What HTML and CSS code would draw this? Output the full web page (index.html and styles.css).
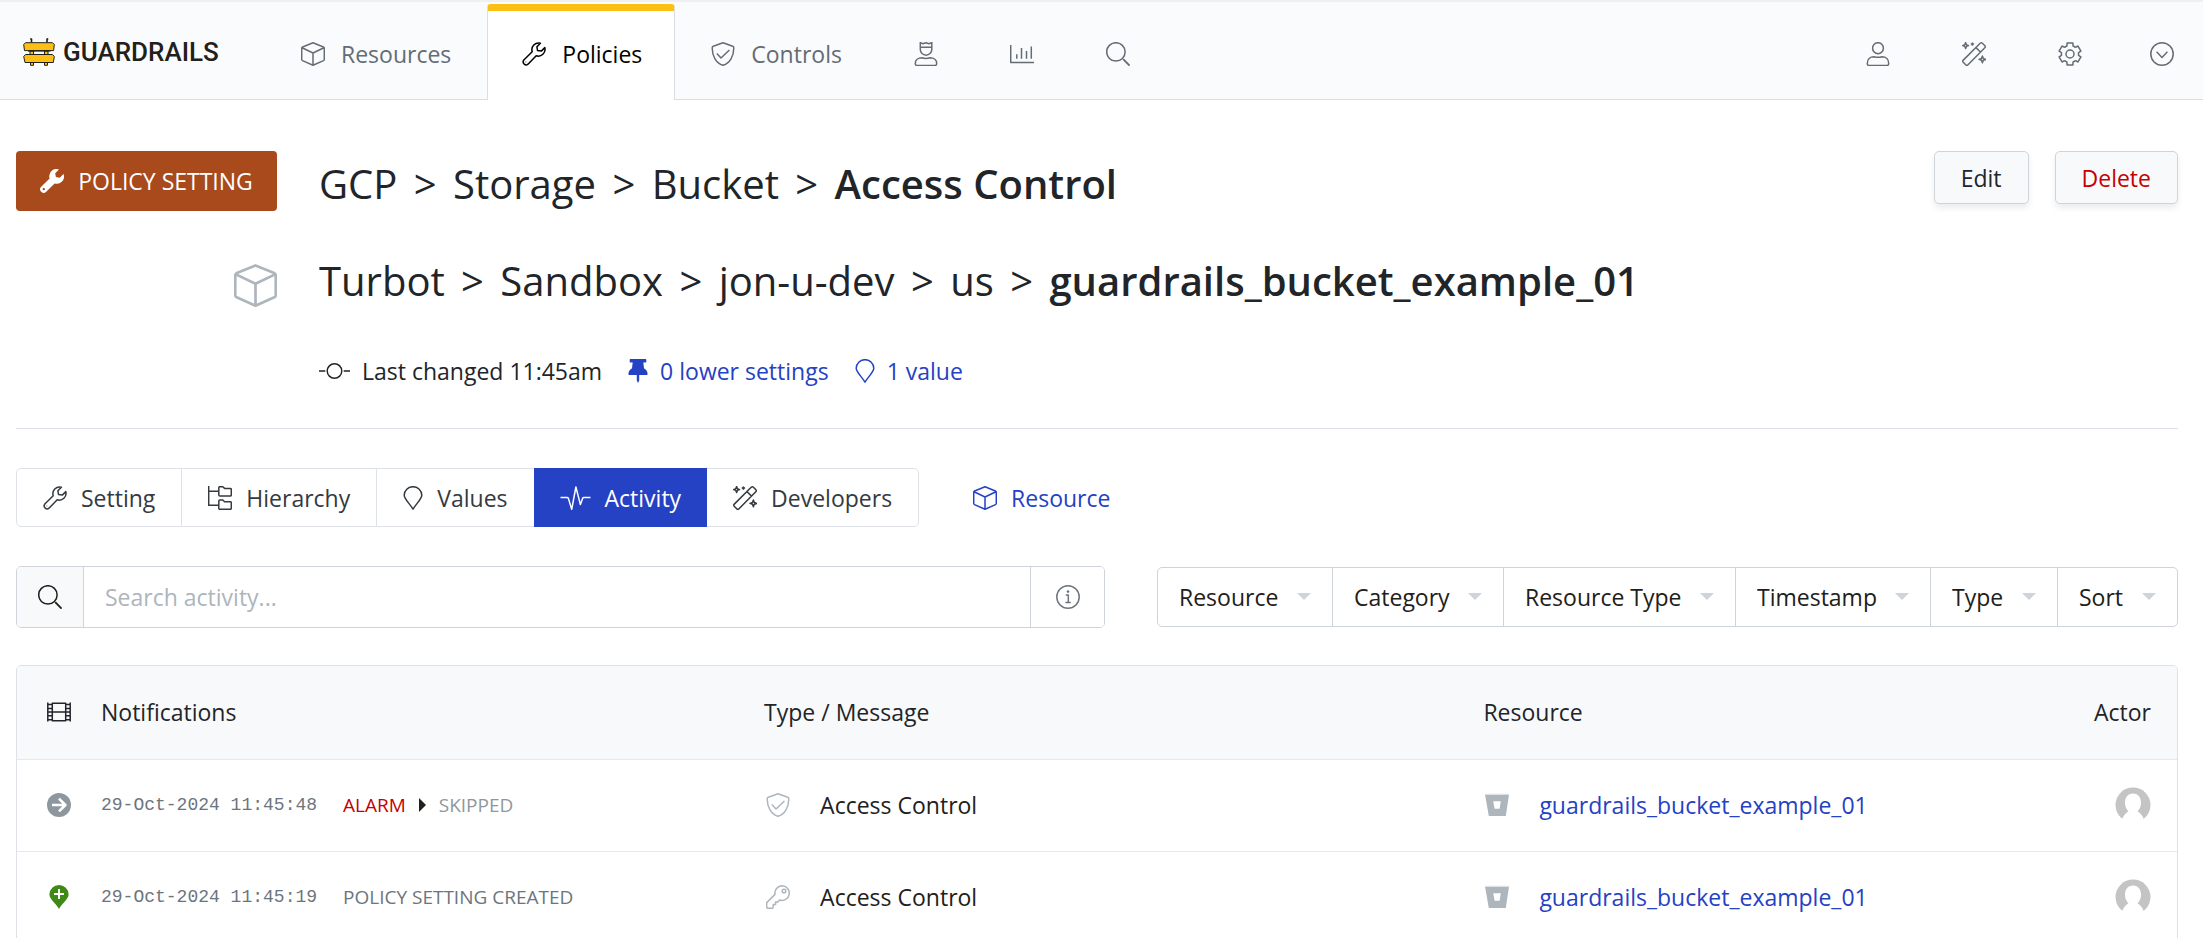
FILE: index.html
```html
<!DOCTYPE html>
<html lang="en">
<head>
<meta charset="utf-8">
<meta name="viewport" content="width=device-width, initial-scale=1">
<title>Access Control - Policy Setting - Guardrails</title>
<link rel="stylesheet" href="styles.css">
</head>
<body>
<svg class="sprite" aria-hidden="true">
  <symbol id="cube" viewBox="0 0 24 24"><path d="M12 .8 22.4 5Q23.3 5.4 23.3 6.4V17.3Q23.3 18.2 22.5 18.6L12 23.3 1.5 18.6Q.7 18.2 .7 17.3V6.4Q.7 5.4 1.6 5ZM1.1 5.8 12 11 22.9 5.8M12 11V23"/></symbol>
  <symbol id="wrench" viewBox="0 0 24 24"><path d="M22.8 5.6A6.8 6.8 0 0 1 14.2 13.8L6 22.2A3 3 0 0 1 1.8 18L10.2 9.8A6.8 6.8 0 0 1 18.4 1.2L14.9 4.7 15.5 8.5 19.3 9.1ZM3.7 19.8V20.3"/></symbol>
  <symbol id="wrench-solid" viewBox="0 0 24 24"><path fill="currentColor" stroke="none" fill-rule="evenodd" d="M23.5 5A7.2 7.2 0 0 1 14.6 14.4L6.2 22.8A3.4 3.4 0 0 1 1.2 17.8L9.6 9.4A7.2 7.2 0 0 1 19 .5L15.2 4.3 15.9 8.1 19.7 8.8ZM3.8 18.9A1.2 1.2 0 1 0 3.8 21.3 1.2 1.2 0 1 0 3.8 18.9Z"/></symbol>
  <symbol id="shield" viewBox="0 0 24 24"><path d="M12 .7 21.7 4.3Q22.8 4.7 22.8 5.9C22.8 14 19 21 12 23.3 5 21 1.2 14 1.2 5.9Q1.2 4.7 2.3 4.3ZM5.8 11.6 10 16 18.4 8"/></symbol>
  <symbol id="king" viewBox="0 0 24 24"><path d="M6.3 .6 9 1.8 12 .8 15 1.8 17.8 .6V7.6A5.7 5.5 0 0 1 6.3 7.6ZM6.3 5.2H17.8M8 15.8C10.5 16.6 13.5 16.6 16 15.8 20 15.8 22.7 18 22.7 21.4 22.7 22.9 22 23.4 21 23.4H3C2 23.4 1.3 22.9 1.3 21.4 1.3 18 4 15.8 8 15.8Z"/></symbol>
  <symbol id="user" viewBox="0 0 24 24"><path d="M12 .7A5.4 5.5 0 1 1 12 11.7 5.4 5.5 0 1 1 12 .7ZM8 14.8C10.5 15.5 13.5 15.5 16 14.8 20 14.8 22.7 17.4 22.7 21.4 22.7 22.9 22 23.4 21 23.4H3C2 23.4 1.3 22.9 1.3 21.4 1.3 17.4 4 14.8 8 14.8Z"/></symbol>
  <symbol id="chart" viewBox="0 0 24 24"><path d="M.7 3V20.5H24M6.8 12.3V16.8M11.5 6V16.8M16.5 9V16.8M21.3 4.5V16.8"/></symbol>
  <symbol id="search" viewBox="0 0 24 24"><circle cx="9.9" cy="9.9" r="9.2"/><path stroke-width="1.9" d="M17.2 17.2 23.6 23.6"/></symbol>
  <symbol id="wand" viewBox="0 0 24 24"><path d="M18.2 1.3Q19.3 .3 20.4 1.3L22.9 3.8Q23.8 4.8 22.8 5.8L6 22.8Q4.8 23.9 3.7 22.8L1.2 20.3Q.2 19.2 1.3 18.1ZM14 5.6 18.4 10M3.6 .6 4.4 2.8 6.6 3.6 4.4 4.4 3.6 6.6 2.8 4.4 .6 3.6 2.8 2.8ZM10.4 .4V3.8M8.7 2.1H12.1M20.4 14 21.3 16.5 23.8 17.4 21.3 18.3 20.4 20.8 19.5 18.3 17 17.4 19.5 16.5Z"/></symbol>
  <symbol id="gear" viewBox="0 0 24 24"><path d="M8.92 3.97 9.08 1.09H14.92L15.08 3.97Q16.3 4.4 17.41 5.32L19.99 4.01 22.91 9.08 20.49 10.65Q20.7 12 20.49 13.35L22.91 14.92 19.99 19.99 17.41 18.68Q16.3 19.6 15.08 20.03L14.92 22.91H9.08L8.92 20.03Q7.7 19.6 6.59 18.68L4.01 19.99 1.09 14.92 3.51 13.35Q3.3 12 3.51 10.65L1.09 9.08 4.01 4.01 6.59 5.32Q7.7 4.4 8.92 3.97Z"/><circle cx="12" cy="12" r="4"/></symbol>
  <symbol id="chevron" viewBox="0 0 24 24"><circle cx="12" cy="12" r="11.2"/><path d="M6.6 9.8 12 15.4 17.4 9.8"/></symbol>
  <symbol id="tree" viewBox="0 0 24 24"><path d="M.7 0V19.3H10.6M.7 5.3H10.6M10.8 1.8Q10.8 .7 11.9 .7H14.8L16.6 2.4H22.3Q23.3 2.4 23.3 3.4V9Q23.3 10 22.3 10H11.9Q10.8 10 10.8 9ZM10.8 15.1Q10.8 14 11.9 14H14.8L16.6 15.7H22.3Q23.3 15.7 23.3 16.7V22.3Q23.3 23.3 22.3 23.3H11.9Q10.8 23.3 10.8 22.3Z"/></symbol>
  <symbol id="pin" viewBox="0 0 20 24"><path d="M10 23.2C7 17.8 1.2 13 1.2 9.2A8.8 8.5 0 0 1 18.8 9.2C18.8 13 13 17.8 10 23.2Z"/></symbol>
  <symbol id="pulse" viewBox="0 0 30 24"><path d="M0 11.5H6.6Q7.6 11.5 7.9 12.4L11.2 23.3 15.4 1 19.9 18.6 22.2 12.3Q22.5 11.5 23.3 11.5H30"/></symbol>
  <symbol id="info" viewBox="0 0 24 24"><circle cx="12" cy="12" r="11.2"/><path d="M9.8 10H12.3V17.6M9.4 17.6H14.8"/><circle cx="12" cy="6.6" r="1.3" fill="currentColor" stroke="none"/></symbol>
  <symbol id="film" viewBox="0 0 24 24"><path d="M.8 2.5V21.5M23.2 2.5V21.5M5.3 3.2H18.7V20.8H5.3ZM5.3 12H18.7M.8 4.5H5.3M.8 8.5H5.3M.8 12H5.3M.8 15.8H5.3M.8 19.7H5.3M18.7 4.5H23.2M18.7 8.5H23.2M18.7 12H23.2M18.7 15.8H23.2M18.7 19.7H23.2"/></symbol>
  <symbol id="arrow-circle" viewBox="0 0 24 24"><circle cx="12" cy="12" r="12" fill="currentColor" stroke="none"/><path stroke="#fff" stroke-width="2.6" d="M5 12H18M12 5.6 18.4 12 12 18.4"/></symbol>
  <symbol id="pin-plus" viewBox="0 0 20 24"><path fill="currentColor" stroke="none" d="M10 24C6.6 18 .4 14 .4 9.5A9.6 9.5 0 0 1 19.6 9.5C19.6 14 13.4 18 10 24Z"/><path stroke="#fff" stroke-width="2" d="M10 4V14M5 9H15"/></symbol>
  <symbol id="key" viewBox="0 0 24 24"><path d="M16 .8A7.3 7.3 0 1 1 13.6 15L11.8 16.9H9.6V19.4H7.2V22Q7.2 23.3 6 23.3H1.8Q.7 23.3 .7 22.2V18.3Q.7 17.6 1.2 17.1L9 9.4A7.4 7.4 0 0 1 16 .8Z"/><circle cx="18" cy="6" r="1.8"/></symbol>
  <symbol id="bucket" viewBox="0 0 24 24"><path fill="currentColor" stroke="none" fill-rule="evenodd" d="M0 1.5H24L20.8 23H3.8ZM8.2 8.3 9.6 15.8H14.6L15.8 8.3Z"/><path stroke="#dfe3e7" stroke-width="1.2" d="M0 1.3H24"/></symbol>
  <symbol id="commit" viewBox="0 0 32 24"><circle cx="16" cy="12" r="7.5"/><path d="M0 12H6.5M25.5 12H32"/></symbol>
  <symbol id="pushpin" viewBox="0 0 20 24"><path fill="currentColor" stroke="none" d="M2.4 0H17.6Q18.3 0 18.3 .7V2.8Q18.3 3.5 17.6 3.5H15.3L16 9.3Q19.6 11.4 19.6 15.2Q19.6 16 18.8 16H11.2V21.5L10 24 8.8 21.5V16H1.2Q.4 16 .4 15.2.4 11.4 4 9.3L4.7 3.5H2.4Q1.7 3.5 1.7 2.8V.7Q1.7 0 2.4 0Z"/></symbol>
  <symbol id="avatar" viewBox="0 0 36 36"><circle cx="18" cy="18" r="17.5" fill="#c4c4c4" stroke="none"/><path fill="#fff" stroke="none" d="M18 6.5C23.3 6.5 26 10.6 26 16 26 19.5 24.5 22.5 22.5 24.3 25.5 26.2 28.5 29 29.8 36H6.2C7.5 29 10.5 26.2 13.5 24.3 11.5 22.5 10 19.5 10 16 10 10.6 12.7 6.5 18 6.5Z"/></symbol>
  <symbol id="rails" viewBox="0 0 32 28"><g stroke="#22201a" stroke-width="1" fill="#fcc015"><path d="M8.5 4.5V1.3L7.3 .6M24 4.5V1.3L25.2 .6" stroke-width="1.6"/><path d="M7 13H10.5V17H7ZM21.5 13H25V17H21.5ZM7.5 24H10.5V27.3H7.5ZM21.5 24H24.5V27.3H21.5Z"/><path d="M2.5 4.7H29.5L31.3 6.5 30.6 12.6H1.5L.7 6.5ZM2.5 16.5H29.5L31.3 18.5 30.3 24.5H2L.7 18.5Z"/></g><path stroke="#22201a" stroke-width="1.2" d="M5 13H27.5"/></symbol>
</svg>
<div class="page">
  <header class="topbar">
    <a class="brand" href="#"><svg class="brand-icon" aria-hidden="true"><use href="#rails"/></svg><span>GUARDRAILS</span></a>
    <nav class="main-nav" aria-label="Main">
      <a class="nav-item" href="#"><svg class="icon"><use href="#cube"/></svg>Resources</a>
      <a class="nav-item active" href="#" aria-current="page"><svg class="icon"><use href="#wrench"/></svg>Policies</a>
      <a class="nav-item" href="#"><svg class="icon"><use href="#shield"/></svg>Controls</a>
      <a class="nav-item" href="#" aria-label="Permissions"><svg class="icon"><use href="#king"/></svg></a>
      <a class="nav-item" href="#" aria-label="Reports"><svg class="icon"><use href="#chart"/></svg></a>
      <a class="nav-item" href="#" aria-label="Search"><svg class="icon"><use href="#search"/></svg></a>
    </nav>
    <nav class="side-nav" aria-label="Account">
      <a class="nav-item" href="#" aria-label="Profile"><svg class="icon"><use href="#user"/></svg></a>
      <a class="nav-item" href="#" aria-label="Developers"><svg class="icon"><use href="#wand"/></svg></a>
      <a class="nav-item" href="#" aria-label="Admin"><svg class="icon"><use href="#gear"/></svg></a>
      <button class="nav-item nav-more" type="button" aria-label="More"><svg class="icon"><use href="#chevron"/></svg></button>
    </nav>
  </header>

  <main class="content">
    <section class="summary">
      <div class="badge-cell"><span class="badge"><svg class="icon"><use href="#wrench-solid"/></svg>POLICY SETTING</span></div>
      <div class="title-row">
        <h1 class="trail">GCP <span class="sep">&gt;</span> Storage <span class="sep">&gt;</span> Bucket <span class="sep">&gt;</span> <strong>Access Control</strong></h1>
        <div class="actions">
          <button class="btn" type="button">Edit</button>
          <button class="btn danger" type="button">Delete</button>
        </div>
      </div>
      <div class="badge-cell"><svg class="icon resource-icon"><use href="#cube"/></svg></div>
      <h2 class="trail">Turbot <span class="sep">&gt;</span> Sandbox <span class="sep">&gt;</span> jon-u-dev <span class="sep">&gt;</span> us <span class="sep">&gt;</span> <strong>guardrails_bucket_example_01</strong></h2>
      <div class="meta">
        <span class="meta-item"><svg class="icon wide"><use href="#commit"/></svg>Last changed 11:45am</span>
        <a class="meta-item" href="#"><svg class="icon slim"><use href="#pushpin"/></svg>0 lower settings</a>
        <a class="meta-item" href="#"><svg class="icon slim"><use href="#pin"/></svg>1 value</a>
      </div>
    </section>

    <div class="tab-row">
      <nav class="tabs" aria-label="Policy setting">
        <a class="tab" href="#"><svg class="icon"><use href="#wrench"/></svg>Setting</a>
        <a class="tab" href="#"><svg class="icon"><use href="#tree"/></svg>Hierarchy</a>
        <a class="tab" href="#"><svg class="icon slim"><use href="#pin"/></svg>Values</a>
        <a class="tab selected" href="#" aria-current="page"><svg class="icon wide"><use href="#pulse"/></svg>Activity</a>
        <a class="tab" href="#"><svg class="icon"><use href="#wand"/></svg>Developers</a>
      </nav>
      <a class="tab-link" href="#"><svg class="icon"><use href="#cube"/></svg>Resource</a>
    </div>

    <div class="tools">
      <form class="search">
        <button class="search-go" type="submit" aria-label="Search"><svg class="icon"><use href="#search"/></svg></button>
        <input class="search-input" type="text" placeholder="Search activity..." aria-label="Search activity">
        <button class="search-help" type="button" aria-label="Search help"><svg class="icon"><use href="#info"/></svg></button>
      </form>
      <div class="filters">
        <div class="filter"><select aria-label="Resource"><option>Resource</option></select></div>
        <div class="filter"><select aria-label="Category"><option>Category</option></select></div>
        <div class="filter"><select aria-label="Resource Type"><option>Resource Type</option></select></div>
        <div class="filter"><select aria-label="Timestamp"><option>Timestamp</option></select></div>
        <div class="filter"><select aria-label="Type"><option>Type</option></select></div>
        <div class="filter"><select aria-label="Sort"><option>Sort</option></select></div>
      </div>
    </div>

    <div class="table-frame">
      <table class="activity">
        <colgroup><col class="c-icon"><col class="c-note"><col class="c-type"><col><col class="c-actor"></colgroup>
        <thead>
          <tr>
            <th class="lead"><svg class="icon"><use href="#film"/></svg></th>
            <th>Notifications</th>
            <th>Type / Message</th>
            <th>Resource</th>
            <th class="actor">Actor</th>
          </tr>
        </thead>
        <tbody>
          <tr>
            <td class="lead"><svg class="icon skipped-icon"><use href="#arrow-circle"/></svg></td>
            <td><div class="note"><time>29-Oct-2024 11:45:48</time><span class="state alarm">ALARM</span><span class="arrow"></span><span class="state skipped">SKIPPED</span></div></td>
            <td><div class="entry"><svg class="icon"><use href="#shield"/></svg>Access Control</div></td>
            <td><div class="entry"><svg class="icon"><use href="#bucket"/></svg><a href="#">guardrails_bucket_example_01</a></div></td>
            <td class="actor"><svg class="avatar" role="img" aria-label="Actor"><use href="#avatar"/></svg></td>
          </tr>
          <tr>
            <td class="lead"><svg class="icon created-icon"><use href="#pin-plus"/></svg></td>
            <td><div class="note"><time>29-Oct-2024 11:45:19</time><span class="state">POLICY SETTING CREATED</span></div></td>
            <td><div class="entry"><svg class="icon"><use href="#key"/></svg>Access Control</div></td>
            <td><div class="entry"><svg class="icon"><use href="#bucket"/></svg><a href="#">guardrails_bucket_example_01</a></div></td>
            <td class="actor"><svg class="avatar" role="img" aria-label="Actor"><use href="#avatar"/></svg></td>
          </tr>
        </tbody>
      </table>
    </div>
  </main>
</div>
</body>
</html>
```

FILE: styles.css
```css
* { box-sizing: border-box; }

body {
  margin: 0;
  background: #fff;
  color: #212529;
  font: 23px/36px "Open Sans", "Noto Sans", sans-serif;
}

a { color: #2541c4; text-decoration: none; }
button, input, select { font: inherit; color: inherit; }
button { cursor: pointer; }

.page { height: 100vh; overflow: hidden; }
.sprite { position: absolute; width: 0; height: 0; }

.icon {
  flex: none;
  width: 24px;
  height: 24px;
  fill: none;
  stroke: currentColor;
  stroke-width: 1.5;
  stroke-linejoin: round;
}
.icon.slim { width: 20px; }
.icon.wide { width: 31px; }

/* Top bar */
.topbar {
  display: flex;
  height: 100px;
  padding: 0 27px 0 23px;
  border-top: 2px solid #f0f0f0;
  border-bottom: 1px solid #dadee4;
  background: #fafbfd;
}
.brand {
  display: flex;
  flex: none;
  align-items: center;
  gap: 8px;
  width: 242px;
  padding-top: 3px;
  color: #22201a;
  font: 500 26px/32px "Liberation Sans Narrow", "Roboto", sans-serif;
}
.brand-icon { width: 32px; height: 28px; fill: none; }
.main-nav { display: flex; }
.side-nav { display: flex; margin-left: auto; }
.nav-item {
  display: flex;
  align-items: center;
  gap: 16px;
  height: 98px;
  padding: 6px 36px 0;
  border: 0;
  background: none;
  color: #646c74;
}
.nav-item.active {
  height: 96px;
  margin-top: 2px;
  padding: 0 32px 4px 34px;
  border: 1px solid #dadee4;
  border-top: 7px solid #fcc015;
  border-bottom: 0;
  border-radius: 4px 4px 0 0;
  background: #fff;
  color: #000;
}
.nav-item.nav-more { padding-right: 2px; padding-left: 32px; }

/* Summary */
.content { padding: 51px 25px 0 16px; }
.summary {
  display: grid;
  grid-template-columns: 261px 1fr;
  column-gap: 42px;
  padding-bottom: 39px;
  border-bottom: 1px solid #dee2e6;
}
.badge-cell { display: flex; justify-content: flex-end; align-items: flex-start; }
.badge {
  display: flex;
  flex: 1;
  align-items: center;
  justify-content: center;
  gap: 14px;
  height: 60px;
  border-radius: 4px;
  background: #a84a1b;
  color: #fff;
  white-space: nowrap;
}
.resource-icon { width: 43px; height: 43px; margin-top: 16px; color: #adb5bd; }
.title-row { display: flex; justify-content: space-between; align-items: flex-start; }
.trail { margin: 0; padding-top: 8px; height: 97px; font-size: 40px; line-height: 50px; font-weight: 400; }
.trail strong { font-weight: 600; }
.sep { margin: 0 6px; }
.actions { display: flex; gap: 26px; }
.btn {
  height: 53px;
  padding: 0 26px;
  border: 1px solid #ced4da;
  border-radius: 5px;
  background: #f8f9fb;
  box-shadow: 0 4px 6px rgba(0, 0, 0, 0.08);
}
.btn.danger { color: #c70000; }
.meta { grid-column: 2; display: flex; gap: 26px; padding-top: 8px; }
.meta-item { display: flex; align-items: center; gap: 12px; }

/* Tabs */
.tab-row { display: flex; align-items: center; padding-top: 39px; }
.tabs { display: flex; border: 1px solid #dee2e6; border-radius: 5px; }
.tab, .tab-link { display: flex; align-items: center; gap: 14px; }
.tab { height: 57px; padding: 0 26px; border-left: 1px solid #dee2e6; color: #343a40; }
.tab:first-child, .tab.selected, .tab.selected + .tab { border-left: 0; }
.tab.selected { height: 59px; margin: -1px 0; background: #2541c4; color: #fff; }
.tab-link { margin-left: 54px; }

/* Search and filters */
.tools { display: flex; align-items: center; gap: 52px; padding-top: 39px; }
.search {
  display: flex;
  flex: 1;
  height: 62px;
  border: 1px solid #ced4da;
  border-radius: 5px;
  overflow: hidden;
}
.search-go, .search-help {
  display: flex;
  align-items: center;
  justify-content: center;
  padding: 0;
  border: 0;
  background: #fff;
}
.search-go { width: 67px; border-right: 1px solid #ced4da; background: #f8f9fb; color: #22201a; }
.search-help { width: 74px; border-left: 1px solid #ced4da; color: #6c757d; }
.search-input { flex: 1; min-width: 0; padding: 0 21px; border: 0; outline: 0; }
.search-input::placeholder { color: #adb5bd; opacity: 1; }
.filters { display: flex; border: 1px solid #ced4da; border-radius: 5px; }
.filter { position: relative; border-left: 1px solid #ced4da; }
.filter:first-child { border-left: 0; }
.filter select {
  height: 58px;
  padding: 0 53px 0 21px;
  border: 0;
  background: none;
  appearance: none;
  color: #22201a;
}
.filter::after {
  content: "";
  position: absolute;
  top: 25px;
  right: 21px;
  border: 7px solid transparent;
  border-top-color: #ced4da;
  border-bottom: 0;
  pointer-events: none;
}

/* Activity table */
.table-frame { margin-top: 37px; border: 1px solid #dee2e6; border-radius: 5px; overflow: hidden; }
.activity { width: 100%; border-collapse: collapse; table-layout: fixed; }
.c-icon { width: 84px; }
.c-note { width: 30.7%; }
.c-type { width: 33.3%; }
.c-actor { width: 120px; }
.activity th, .activity td { height: 92px; padding: 0; text-align: left; font-weight: 400; vertical-align: middle; }
.activity th { height: 93px; background: #f8f9fb; }
.activity td { border-top: 1px solid #e6e8ea; color: #22201a; }
.activity .lead { text-align: center; }
.lead .icon { display: block; margin: 0 auto; }
.activity .actor { padding-right: 26px; text-align: right; }
.note { display: flex; align-items: center; color: #6c757d; font-size: 19px; }
.note time { width: 242px; font-family: "Liberation Mono", monospace; font-size: 18px; }
.alarm { color: #c70000; }
.skipped { color: #8f979e; }
.arrow { margin: 0 13px; border: 7px solid transparent; border-left-color: #22201a; border-right: 0; }
.entry { display: flex; align-items: center; gap: 30px; padding-left: 2px; }
.entry .icon { color: #adb5bd; }
.skipped-icon { color: #8f979e; }
.created-icon { color: #3f8a17; }
.avatar { display: block; width: 36px; height: 36px; margin-left: auto; }
```
